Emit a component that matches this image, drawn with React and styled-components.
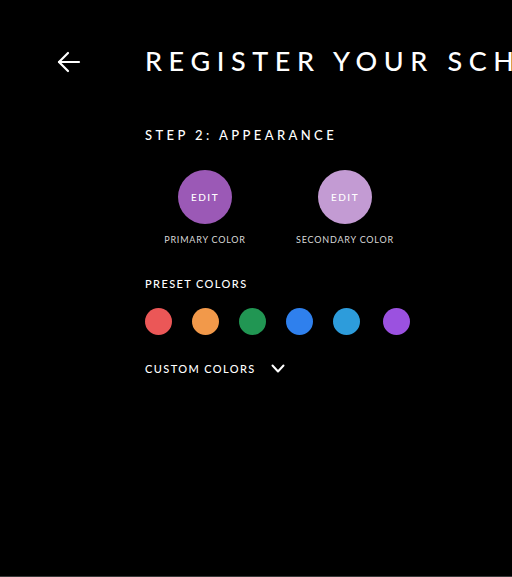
import React from 'react';
import styled, { createGlobalStyle } from 'styled-components';

const GlobalStyle = createGlobalStyle`
  html, body {
    margin: 0;
    padding: 0;
    background: #000;
    overflow: hidden;
  }
  * {
    box-sizing: border-box;
  }
`;

const Page = styled.div`
  width: 100%;
  height: 100vh;
  background: #000;
  color: #fff;
  font-family: 'Lato', 'Noto Sans', sans-serif;
  border-bottom: 1px solid #3a3a3a;
  overflow: hidden;
`;

const Header = styled.header`
  display: flex;
  align-items: center;
  height: 60px;
  margin-top: 32px;
  padding-left: 56px;
  white-space: nowrap;
`;

const BackButton = styled.button`
  display: flex;
  align-items: center;
  justify-content: center;
  width: 26px;
  height: 26px;
  padding: 0;
  margin-right: 63px;
  background: none;
  border: none;
  color: #fff;
  cursor: pointer;
`;

const Title = styled.h1`
  margin: 0 0 3px;
  font-size: 27px;
  font-weight: 500;
  letter-spacing: 6.6px;
`;

const Content = styled.main`
  display: flex;
  flex-direction: column;
  padding-left: 145px;
  padding-top: 37px;
`;

const SectionLabel = styled.div`
  margin-top: ${props => props.gap || 0}px;
  font-size: ${props => props.size || 11}px;
  font-weight: 500;
  letter-spacing: ${props => props.spacing || 1.4}px;
  line-height: 1;
  text-transform: uppercase;
`;

const SwatchRow = styled.div`
  display: grid;
  grid-template-columns: 120px 120px;
  column-gap: 20px;
  margin-top: 28px;
`;

const SwatchColumn = styled.div`
  display: flex;
  flex-direction: column;
  align-items: center;
  gap: 10px;
`;

const EditCircle = styled.button`
  width: 54px;
  height: 54px;
  border-radius: 50%;
  border: none;
  padding: 0;
  background: ${props => props.color};
  color: #fff;
  font-family: inherit;
  font-size: 10px;
  font-weight: 500;
  letter-spacing: 1.5px;
  cursor: pointer;
`;

const SwatchName = styled.span`
  font-size: 9px;
  letter-spacing: 0.8px;
  color: #d8d8d8;
`;

const PresetList = styled.div`
  display: flex;
  gap: 20px;
  margin-top: 19px;
`;

const PresetDot = styled.button`
  width: 27px;
  height: 27px;
  border-radius: 50%;
  border: none;
  padding: 0;
  margin-left: ${props => props.offset || 0}px;
  background: ${props => props.color};
  cursor: pointer;
`;

const Disclosure = styled.button`
  display: flex;
  align-items: center;
  gap: 15px;
  margin-top: 28px;
  padding: 0;
  background: none;
  border: none;
  color: #fff;
  font-family: inherit;
  cursor: pointer;
  align-self: flex-start;
`;

const presets = [
  { color: '#eb5757' },
  { color: '#f2994a' },
  { color: '#219653' },
  { color: '#2f80ed' },
  { color: '#2d9cdb' },
  { color: '#9b51e0', offset: 3 },
];

export default function App() {
  return (
    <Page>
      <GlobalStyle />
      <Header>
        <BackButton aria-label="Back">
          <svg width="26" height="26" viewBox="0 0 26 26" fill="none" stroke="currentColor" strokeWidth="2.2" strokeLinecap="round" strokeLinejoin="round">
            <path d="M23 13H3" />
            <path d="M12 4l-9 9 9 9" />
          </svg>
        </BackButton>
        <Title>REGISTER YOUR SCHOOL</Title>
      </Header>
      <Content>
        <SectionLabel size={13} spacing={3.4}>Step 2: Appearance</SectionLabel>
        <SwatchRow>
          <SwatchColumn>
            <EditCircle color="#9b59b6">EDIT</EditCircle>
            <SwatchName>PRIMARY COLOR</SwatchName>
          </SwatchColumn>
          <SwatchColumn>
            <EditCircle color="#c39bd3">EDIT</EditCircle>
            <SwatchName>SECONDARY COLOR</SwatchName>
          </SwatchColumn>
        </SwatchRow>
        <SectionLabel gap={33}>Preset Colors</SectionLabel>
        <PresetList>
          {presets.map(p => (
            <PresetDot key={p.color} color={p.color} offset={p.offset} />
          ))}
        </PresetList>
        <Disclosure>
          <SectionLabel>Custom Colors</SectionLabel>
          <svg width="14" height="9" viewBox="0 0 14 9" fill="none" stroke="currentColor" strokeWidth="2" strokeLinecap="round" strokeLinejoin="round">
            <path d="M1.5 1.5l5.5 6 5.5-6" />
          </svg>
        </Disclosure>
      </Content>
    </Page>
  );
}
